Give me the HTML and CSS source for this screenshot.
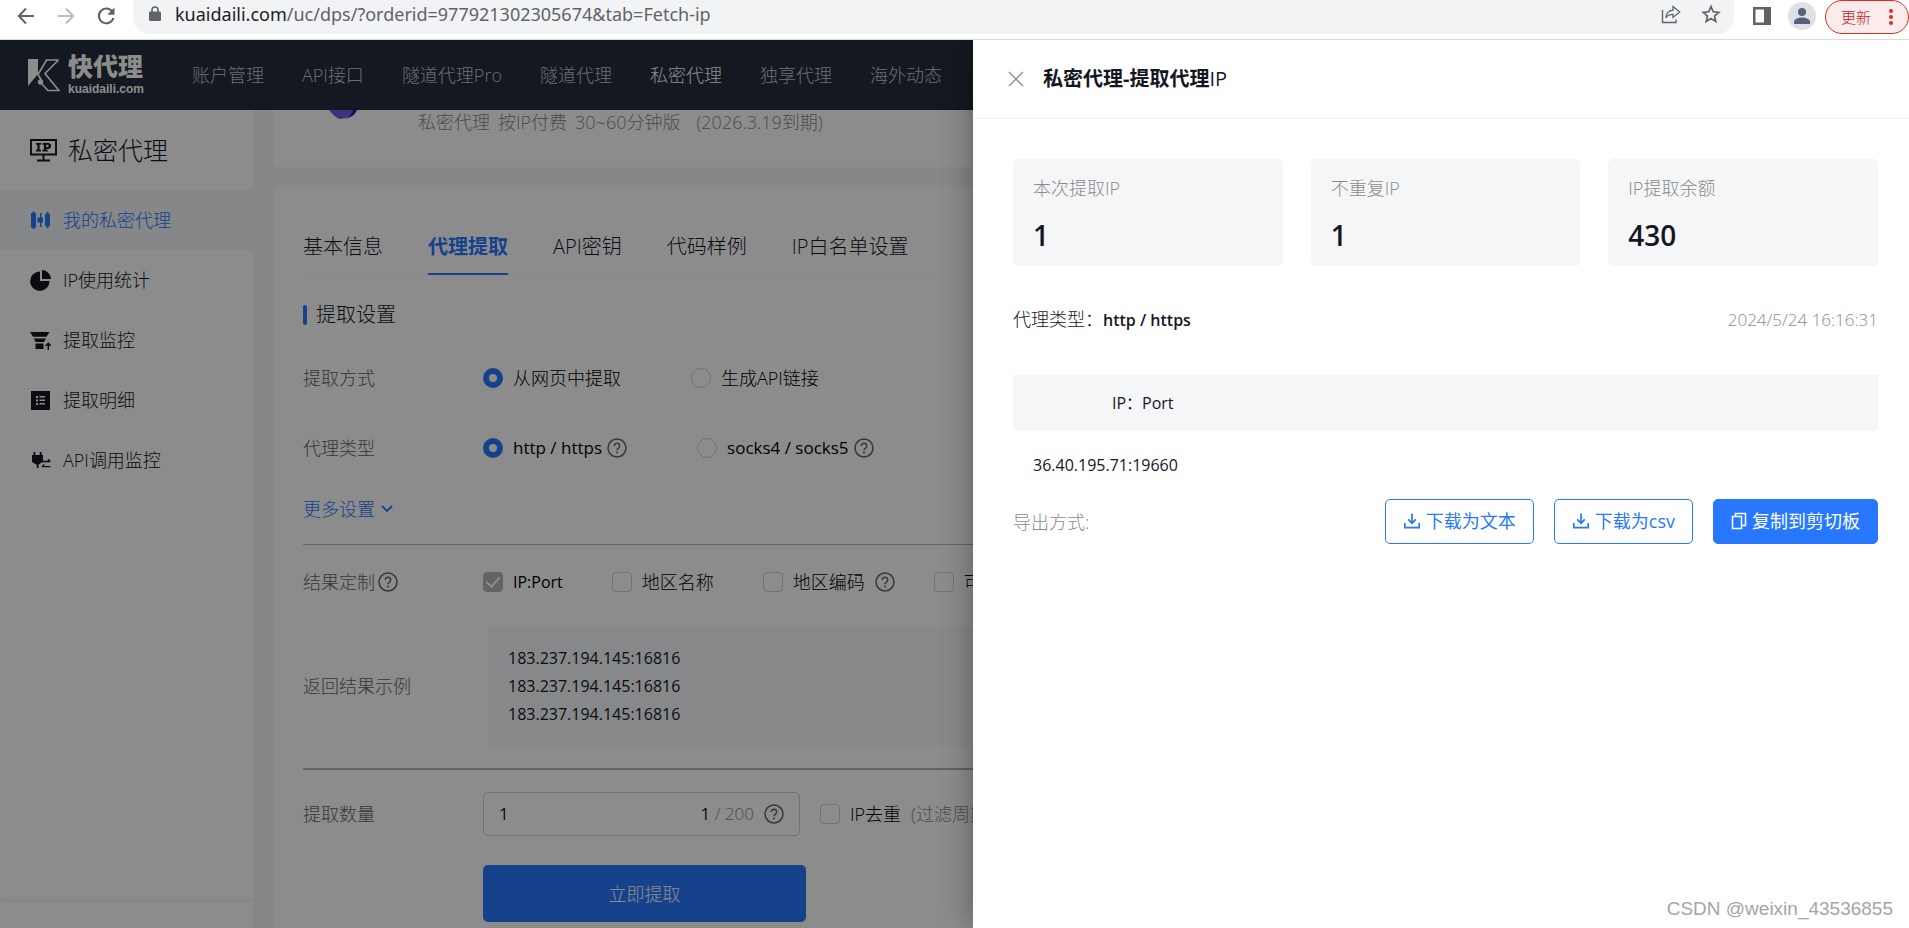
FILE: index.html
```html
<!DOCTYPE html>
<html lang="zh-CN">
<head>
<meta charset="utf-8">
<title>私密代理-提取代理IP</title>
<link rel="stylesheet" href="styles.css">
</head>
<body>
<svg class="sprite" aria-hidden="true">
  <symbol id="help" viewBox="0 0 20 20"><circle cx="10" cy="10" r="9" fill="none" stroke="currentColor" stroke-width="1.5"/><path d="M7.3 8a2.7 2.7 0 1 1 4.3 2.1c-1 .7-1.6 1.1-1.6 2.2" fill="none" stroke="currentColor" stroke-width="1.5"/><circle cx="10" cy="14.6" r="1" fill="currentColor"/></symbol>
  <symbol id="download" viewBox="0 0 18 18"><path d="M9 1.5v9.5M5.2 7.4 9 11.2l3.8-3.8M1.8 11v4.7h14.4V11" fill="none" stroke="currentColor" stroke-width="1.7"/></symbol>
</svg>

<header class="browser">
  <button class="tool" aria-label="后退"><svg width="18" height="18" viewBox="0 0 18 18"><path d="M17 9H2M9 1.5 1.8 9 9 16.500" fill="none" stroke="#5f6368" stroke-width="1.9"/></svg></button>
  <button class="tool" aria-label="前进"><svg width="18" height="18" viewBox="0 0 18 18"><path d="M1 9h15M9 1.500 16.200 9 9 16.500" fill="none" stroke="#b9bbbe" stroke-width="1.900"/></svg></button>
  <button class="tool" aria-label="刷新"><svg width="20" height="20" viewBox="0 0 20 20"><path d="M16.300 5.500A7.400 7.400 0 1 0 17.400 12" fill="none" stroke="#5f6368" stroke-width="2.100"/><path d="M18.500 1.500v7.200h-7.200z" fill="#5f6368"/></svg></button>
  <div class="address">
    <svg width="12" height="16" viewBox="0 0 12 16"><rect y="5.500" width="12" height="9.500" rx="1.300" fill="#5f6368"/><path d="M3 6V4a3 3 0 0 1 6 0v2" fill="none" stroke="#5f6368" stroke-width="1.600"/></svg>
    <span class="url"><b>kuaidaili.com</b>/uc/dps/?orderid=977921302305674&amp;tab=Fetch-ip</span>
    <button class="tool" aria-label="分享"><svg width="20" height="20" viewBox="0 0 20 20"><path d="M1.500 6v12.500H15V15.500" fill="none" stroke="#5f6368" stroke-width="1.400"/><path d="M12 2.500 18.700 8 12 13.500v-3.200c-3.600 0-5.700 1-7.200 3.600.4-4.300 2.800-7.200 7.200-7.700z" fill="none" stroke="#5f6368" stroke-width="1.300"/></svg></button>
    <button class="tool" aria-label="收藏"><svg width="20" height="20" viewBox="0 0 20 20"><path d="m10 2.500 2.200 5.300 5.600.5-4.300 3.700 1.300 5.500L10 14.600l-4.800 2.900L6.500 12 2.200 8.300l5.600-.5z" fill="none" stroke="#5f6368" stroke-width="1.700"/></svg></button>
  </div>
  <button class="tool" aria-label="侧边栏"><svg width="18" height="18" viewBox="0 0 18 18"><path d="M0 0h18v18H0z" fill="#5f6368"/><path d="M2.500 2.500H11v13H2.500z" fill="#fff"/></svg></button>
  <button class="avatar" aria-label="用户"><svg width="28" height="28" viewBox="0 0 28 28"><circle cx="14" cy="14" r="14" fill="#dee1e6"/><circle cx="14" cy="10" r="4" fill="#56617a"/><path d="M6 22v-2c0-3 4-4.500 8-4.500s8 1.500 8 4.500v2z" fill="#56617a"/></svg></button>
  <button class="update">更新<svg width="4" height="16" viewBox="0 0 4 16"><g fill="#d93025"><circle cx="2" cy="2" r="2"/><circle cx="2" cy="8" r="2"/><circle cx="2" cy="14" r="2"/></g></svg></button>
</header>

<div class="page">
  <nav class="topnav">
    <a class="logo" href="#">
      <svg width="32" height="33" viewBox="0 0 32 33"><path d="M0 0h10v15L0 27z" fill="#fff"/><path d="M30.500 1H18.500L10 15.500l3.500 6M12.500 23.500l7.500 8h11L17 14.500 30.500 1" fill="none" stroke="#fff" stroke-width="1.700"/><circle cx="12.500" cy="23" r="2.700" fill="#fff"/></svg>
      <span class="brand"><span class="brand-cn">快代理</span><span class="brand-en">kuaidaili.com</span></span>
    </a>
    <a href="#">账户管理</a><a href="#">API接口</a><a href="#">隧道代理Pro</a><a href="#">隧道代理</a><a href="#" class="current">私密代理</a><a href="#">独享代理</a><a href="#">海外动态</a>
  </nav>
  <div class="body">
    <aside class="sidebar">
      <h2><svg width="27" height="23" viewBox="0 0 27 23"><path d="M1 1h25v14.500H1zM13.500 15.500V21M7 21.500h13" fill="none" stroke="#14171f" stroke-width="1.900"/><path d="M6 4h5v1.700H9.600v5.100H11v1.700H6v-1.700h1.400V5.700H6zM12.500 4h6.300L21 5.500v3l-2.200 1.400h-2.600v.9h1.500v1.700h-5.200v-1.700h1.400V5.700h-1.400zm3.700 1.700v2.600h2.300V5.700z" fill="#14171f" fill-rule="evenodd"/></svg>私密代理</h2>
      <a href="#" class="active"><svg width="21" height="21" viewBox="0 0 21 21"><path d="M1 3h1.500V1.500h2V3H6v14.500H4.500V19h-2v-1.500H1zM7.500 7.500H10V3h1.500v4.500H13v5h-1.500V17H10v-4.500H7.500zM15 4h1.500V2h2v2H20v12h-1.500v2h-2v-2H15z" fill="currentColor"/></svg>我的私密代理</a>
      <a href="#"><svg width="21" height="21" viewBox="0 0 21 21"><path d="M10 1.500V11h9.500A9.700 9.700 0 1 1 10 1.500zM12 0a9.300 9.300 0 0 1 9 9h-9z" fill="currentColor"/></svg>IP使用统计</a>
      <a href="#"><svg width="21" height="21" viewBox="0 0 21 21"><path d="M0 2h19.500l-3 4.800H3zM4 8.500h12L14 12H5.500zM5.500 13.500h8V19h-8z" fill="currentColor"/><path d="M18.300 20v-6.500M15.600 16l2.700-2.700L21 16" fill="none" stroke="currentColor" stroke-width="1.500"/></svg>提取监控</a>
      <a href="#"><svg width="21" height="21" viewBox="0 0 21 21"><path d="M1 1h19v19H1zM6 6v2h2V6zm3.500 0v1.500H15V6zM6 9.500v2h2v-2zm3.500 0V11H15V9.500zM6 13v2h2v-2zm3.500 0v1.500H15V13z" fill="currentColor" fill-rule="evenodd"/></svg>提取明细</a>
      <a href="#"><svg width="21" height="21" viewBox="0 0 21 21"><path d="M3.500 2h1.800v3h4.500V2h1.800v3H13v6.500l-4.500 3.300V18H6.800v-3.200L2 12V5h1.500z" fill="currentColor"/><path d="M12 11.500h8.500M18 9.300l2.300 2.200M20.500 16.700H12M14.300 14.500 12 16.700" fill="none" stroke="currentColor" stroke-width="1.300"/></svg>API调用监控</a>
      <div class="sidebar-foot"></div>
    </aside>
    <main class="main">
      <section class="card order">
        <svg class="badge" width="30" height="10" viewBox="0 0 30 10"><path d="M0 0h28c-4 5-9 8-17 9C8 8.500 4 5 0 0z" fill="#6c5ce8"/><path d="M28 0c-2 5-6 7.500-12 8.700C20 7 23 4 24 0z" fill="#2c1ba0"/></svg>
        <p><span>私密代理</span><span>按IP付费</span><span>30~60分钟版</span><span class="due">(2026.3.19到期)</span></p>
      </section>
      <section class="card settings">
        <div class="tabs"><a href="#">基本信息</a><a href="#" class="on">代理提取</a><a href="#">API密钥</a><a href="#">代码样例</a><a href="#">IP白名单设置</a></div>
        <h3>提取设置</h3>
        <div class="row">
          <span class="name">提取方式</span>
          <div class="choices wide"><label><input type="radio" name="way" checked>从网页中提取</label><label><input type="radio" name="way">生成API链接</label></div>
        </div>
        <div class="row second">
          <span class="name">代理类型</span>
          <div class="choices wide"><label class="latin"><input type="radio" name="kind" checked>http / https <svg class="help"><use href="#help"/></svg></label><label class="latin"><input type="radio" name="kind">socks4 / socks5 <svg class="help"><use href="#help"/></svg></label></div>
        </div>
        <a href="#" class="more">更多设置<svg width="12" height="8" viewBox="0 0 12 8"><path d="m1 1 5 5 5-5" fill="none" stroke="currentColor" stroke-width="1.800"/></svg></a>
        <hr class="thin">
        <div class="row custom">
          <span class="name">结果定制<svg class="help"><use href="#help"/></svg></span>
          <div class="choices"><label class="port"><input type="checkbox" checked disabled>IP:Port</label><label><input type="checkbox">地区名称</label><label><input type="checkbox">地区编码<svg class="help spaced"><use href="#help"/></svg></label><label><input type="checkbox">可用时长</label></div>
        </div>
        <div class="row example">
          <span class="name">返回结果示例</span>
          <div class="result">183.237.194.145:16816<br>183.237.194.145:16816<br>183.237.194.145:16816</div>
        </div>
        <hr>
        <div class="row amount">
          <label class="name" for="count">提取数量</label>
          <div class="choices">
            <div class="count"><input id="count" type="text" value="1"><span><b>1</b> / 200</span><svg class="help"><use href="#help"/></svg></div>
            <label><input type="checkbox">IP去重<span class="note">(过滤周期)</span></label>
          </div>
        </div>
        <button class="fetch">立即提取</button>
      </section>
    </main>
  </div>
  <div class="mask"></div>
  <section class="drawer" role="dialog" aria-labelledby="drawer-title">
    <header>
      <button class="close" aria-label="关闭"><svg width="16" height="16" viewBox="0 0 16 16"><path d="m1 1 14 14M15 1 1 15" stroke="#8f8f8f" stroke-width="1.400"/></svg></button>
      <h1 id="drawer-title">私密代理-提取代理<span>IP</span></h1>
    </header>
    <div class="content">
      <div class="stats">
        <div><span>本次提取IP</span><strong>1</strong></div>
        <div><span>不重复IP</span><strong>1</strong></div>
        <div><span>IP提取余额</span><strong>430</strong></div>
      </div>
      <div class="meta"><p>代理类型：<b>http / https</b></p><time>2024/5/24 16:16:31</time></div>
      <table>
        <thead><tr><th>IP：Port</th><th></th></tr></thead>
        <tbody><tr><td>36.40.195.71:19660</td><td></td></tr></tbody>
      </table>
      <div class="export">
        <span>导出方式:</span>
        <button><svg width="18" height="18"><use href="#download"/></svg>下载为文本</button>
        <button><svg width="18" height="18"><use href="#download"/></svg>下载为csv</button>
        <button class="primary"><svg width="16" height="18" viewBox="0 0 16 18"><path d="M1.500 4.500h9v12h-9zM4.500 4V1.500h10v12H11" fill="none" stroke="currentColor" stroke-width="1.500"/></svg>复制到剪切板</button>
      </div>
    </div>
  </section>
  <div class="watermark">CSDN @weixin_43536855</div>
</div>
</body>
</html>
```

FILE: styles.css
```css
* { box-sizing: border-box; }
body {
  margin: 0;
  height: 100vh;
  display: flex;
  flex-direction: column;
  overflow: hidden;
  font-family: "Open Sans", "Noto Sans CJK SC", sans-serif;
  font-size: 18px;
  font-weight: 300;
  line-height: 30px;
  color: #14171f;
  white-space: nowrap;
}
h1, h2, h3, p { margin: 0; font-weight: 300; }
a { color: inherit; text-decoration: none; }
button { font: inherit; border: 0; padding: 0; background: none; color: inherit; }
svg { flex: none; display: block; }
.sprite { position: absolute; width: 0; height: 0; }

.browser {
  flex: none;
  height: 40px;
  display: flex;
  align-items: flex-start;
  padding-left: 16px;
  border-bottom: 1px solid #dadce0;
  background: #fff;
}
.tool { width: 20px; height: 32px; margin-right: 20px; display: grid; place-items: center; }
.address {
  flex: 1;
  height: 34px;
  display: flex;
  align-items: center;
  gap: 20px;
  padding: 0 13px 6px 16px;
  margin: 0 18px 0 -3px;
  border-radius: 0 0 17px 17px;
  background: #f1f3f4;
}
.address .tool { margin: 0; }
.url { flex: 1; margin-left: -6px; font-family: "Noto Sans", sans-serif; font-weight: 400; color: #5f6368; }
.url b { font-weight: 400; color: #202124; }
.browser > .tool:nth-of-type(4) { margin-right: 16px; }
.avatar { margin: 2px 9px 0 0; }
.update {
  width: 84px;
  height: 34px;
  display: flex;
  align-items: center;
  justify-content: space-between;
  padding: 0 15px;
  border: 1px solid #d93025;
  border-radius: 17px;
  background: #fbeceb;
  color: #c5221f;
  font-size: 15px;
}

.page { flex: 1; min-height: 0; position: relative; overflow: hidden; display: flex; flex-direction: column; }
.topnav {
  flex: none;
  height: 70px;
  display: flex;
  align-items: center;
  gap: 38px;
  padding-left: 28px;
  background: #252c3b;
  color: #c4c6ca;
}
.topnav .current { color: #fff; }
.logo { display: flex; gap: 8px; align-items: center; margin-right: 10px; color: #fff; }
.brand { display: flex; flex-direction: column; gap: 4px; width: 76px; }
.brand-cn { font: 900 25px/24px "Liberation Sans", "Noto Sans CJK SC", sans-serif; }
.brand-en { font: bold 12px/12px "Liberation Sans", sans-serif; }

.body { flex: 1; min-height: 0; display: flex; background: #f5f6f8; }
.sidebar { width: 253px; flex: none; display: flex; flex-direction: column; background: #fff; }
.sidebar h2 { height: 80px; display: flex; align-items: center; gap: 11px; padding-left: 30px; font-size: 25px; }
.sidebar a { height: 60px; display: flex; align-items: center; gap: 12px; padding-left: 30px; }
.sidebar .active { background: #f5f6f8; color: #2878ff; }
.sidebar-foot { height: 26px; margin-top: auto; box-shadow: 0 -2px 5px #e9eef5; }
.main { flex: 1; padding-left: 20px; display: flex; flex-direction: column; gap: 20px; }
.card { background: #fff; border-radius: 5px; padding: 0 30px; }
.order { position: relative; flex: none; height: 57px; padding-left: 145px; border-radius: 0 0 5px 5px; color: #8b8b8b; }
.badge { position: absolute; left: 56px; top: 0; }
.order p { display: flex; gap: 8px; line-height: 25px; }
.order .due { margin-left: 8px; }
.settings { flex: 1; padding-top: 45px; }
.tabs { display: flex; gap: 45px; border-bottom: 1px solid #f6f6f6; font-size: 20px; }
.tabs a { padding-bottom: 11px; border-bottom: 2px solid transparent; margin-bottom: -1px; }
.tabs .on { color: #2878ff; border-color: #2878ff; font-weight: 700; }
h3 { display: flex; align-items: center; gap: 9px; margin-top: 25px; font-size: 20px; }
h3::before { content: ""; width: 4px; height: 20px; border-radius: 2px; background: #2878ff; }
.row { display: grid; grid-template-columns: 180px 1fr; align-items: center; min-height: 40px; margin-top: 28px; }
.row.second { margin-top: 30px; }
.row.custom { margin-top: 17px; }
.row.example { margin-top: 24px; }
.row.amount { margin-top: 22px; }
.name { display: flex; align-items: center; gap: 3px; color: #666; }
.choices { display: flex; align-items: center; gap: 49px; }
.choices.wide { gap: 70px; }
.choices label { display: flex; align-items: center; gap: 10px; color: #000; }
.choices .latin { font-size: 17px; font-weight: 400; }
.choices .port { font-size: 16px; font-weight: 400; }
.help { width: 20px; height: 20px; color: #666; margin-left: -5px; }
.name .help, .count .help { margin-left: 0; }
.help.spaced { margin: 0 -10px 0 0; }
input[type=radio], input[type=checkbox] {
  appearance: none;
  width: 20px;
  height: 20px;
  margin: 0;
  border: 1px solid #cfcfcf;
  border-radius: 50%;
  background: #fff;
}
input[type=radio]:checked { border: 6px solid #2878ff; }
input[type=checkbox] { border-radius: 4px; display: grid; place-items: center; }
input[type=checkbox]:checked { background: #b5b5b5; border-color: #b5b5b5; }
input[type=checkbox]:checked::after { content: ""; width: 6px; height: 11px; margin-bottom: 3px; border: solid #fff; border-width: 0 2px 2px 0; transform: rotate(40deg); }
.more { display: flex; align-items: center; gap: 6px; margin-top: 26px; color: #2878ff; }
hr { margin: 22px 0 0; border: 0; height: 2px; background: #acb6be; }
hr.thin { margin-top: 20px; height: 1px; background: #aabccb; }
.result { margin-left: 5px; padding: 18px 20px; border-radius: 5px; background: #f5f7fa; font-size: 16px; font-weight: 400; line-height: 28px; }
.count { width: 317px; height: 44px; display: flex; align-items: center; gap: 10px; padding: 0 15px; border: 1px solid #d0d0d0; border-radius: 5px; color: #8b8b8b; font-size: 17px; }
.count input { flex: 1; min-width: 0; border: 0; padding: 0; font: inherit; font-weight: 400; color: #14171f; background: none; }
.count b { font-weight: 400; color: #14171f; }
.amount .choices { gap: 20px; }
.choices .note { color: #8b8b8b; }
.fetch { display: block; width: 323px; height: 57px; margin: 29px 0 0 180px; border-radius: 5px; background: #2878ff; color: #fff; }

.mask { position: absolute; inset: 0; background: rgba(0, 0, 0, .45); }
.drawer { position: absolute; inset: 0 0 0 auto; width: 49%; min-width: 936px; background: #fff; box-shadow: -6px 0 24px rgba(0, 0, 0, .25); }
.drawer header { height: 79px; display: flex; align-items: center; gap: 19px; padding-left: 35px; border-bottom: 1px solid #efefef; }
.drawer h1 { font-size: 20px; font-weight: 700; }
.drawer h1 span { font-weight: 400; }
.content { padding: 40px 31px 0 40px; }
.stats { display: grid; grid-template-columns: repeat(3, 1fr); gap: 28px; }
.stats > div { height: 107px; padding: 14px 20px; border-radius: 5px; background: #f5f6f8; display: flex; flex-direction: column; gap: 17px; }
.stats span { color: #8b8b8b; }
.stats strong { font-size: 28px; font-weight: 600; }
.meta { display: flex; justify-content: space-between; align-items: center; margin: 38px 0 40px; }
.meta b { font-size: 16px; font-weight: 600; }
time { font-size: 17px; color: #8b8b8b; }
table { width: 100%; border-collapse: collapse; table-layout: fixed; }
th, td { height: 56px; padding: 0; font-size: 16px; font-weight: 400; }
th { background: #f5f6f8; }
th:first-child { width: 30%; border-radius: 0 0 0 5px; }
th:last-child { border-radius: 0 0 5px 0; }
td { height: 68px; padding-left: 20px; }
.export { display: flex; align-items: center; gap: 20px; color: #8b8b8b; }
.export span { flex: 1; }
.export button { height: 45px; display: flex; align-items: center; gap: 5px; padding: 0 17px 2px; border: 1px solid #2878ff; border-radius: 5px; color: #2878ff; font-weight: 400; }
.export .primary { background: #2878ff; color: #fff; }
.watermark { position: absolute; right: 16px; bottom: 4px; font: 19px/30px "Liberation Sans", sans-serif; color: #a5a5a5; }
```
